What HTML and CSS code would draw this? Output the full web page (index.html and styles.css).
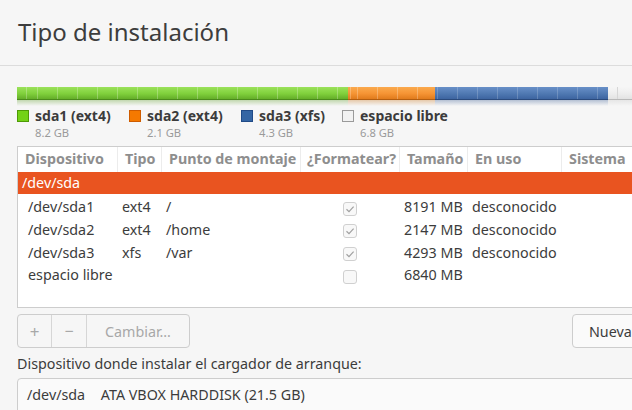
FILE: index.html
```html
<!DOCTYPE html>
<html lang="es">
<head>
<meta charset="utf-8">
<title>Tipo de instalación</title>
<link rel="stylesheet" href="styles.css">
</head>
<body>
<div class="window">
  <header class="titlebar">
    <h1 class="title">Tipo de instalación</h1>
  </header>
  <main class="content">
    <div class="bar">
      <div class="seg seg-green"><div class="fill"></div><div class="refl"></div></div>
      <div class="seg seg-orange"><div class="fill"></div><div class="refl"></div></div>
      <div class="seg seg-blue"><div class="fill"></div><div class="refl"></div></div>
      <div class="seg seg-free"><div class="fill"></div><div class="refl"></div></div>
    </div>
    <div class="legend">
      <div class="legend-item li-1">
        <span class="swatch sw-green"></span>
        <div class="legend-text"><div class="legend-name">sda1 (ext4)</div><div class="legend-size">8.2 GB</div></div>
      </div>
      <div class="legend-item li-2">
        <span class="swatch sw-orange"></span>
        <div class="legend-text"><div class="legend-name">sda2 (ext4)</div><div class="legend-size">2.1 GB</div></div>
      </div>
      <div class="legend-item li-3">
        <span class="swatch sw-blue"></span>
        <div class="legend-text"><div class="legend-name">sda3 (xfs)</div><div class="legend-size">4.3 GB</div></div>
      </div>
      <div class="legend-item li-4">
        <span class="swatch sw-free"></span>
        <div class="legend-text"><div class="legend-name">espacio libre</div><div class="legend-size">6.8 GB</div></div>
      </div>
    </div>

    <div class="table">
      <div class="row head">
        <div class="c c1">Dispositivo</div>
        <div class="c c2">Tipo</div>
        <div class="c c3">Punto de montaje</div>
        <div class="c c4">¿Formatear?</div>
        <div class="c c5">Tamaño</div>
        <div class="c c6">En uso</div>
        <div class="c c7">Sistema</div>
      </div>
      <div class="row sel">
        <div class="c c1">/dev/sda</div>
      </div>
      <div class="row data">
        <div class="c c1 child">/dev/sda1</div>
        <div class="c c2">ext4</div>
        <div class="c c3">/</div>
        <div class="c c4"><span class="check on"><svg viewBox="0 0 14 14" width="14" height="14"><path d="M3.5 7.2 L6 9.6 L10.6 4.6" fill="none" stroke="#a0a0a0" stroke-width="1.2"/></svg></span></div>
        <div class="c c5">8191 MB</div>
        <div class="c c6">desconocido</div>
        <div class="c c7"></div>
      </div>
      <div class="row data">
        <div class="c c1 child">/dev/sda2</div>
        <div class="c c2">ext4</div>
        <div class="c c3">/home</div>
        <div class="c c4"><span class="check on"><svg viewBox="0 0 14 14" width="14" height="14"><path d="M3.5 7.2 L6 9.6 L10.6 4.6" fill="none" stroke="#a0a0a0" stroke-width="1.2"/></svg></span></div>
        <div class="c c5">2147 MB</div>
        <div class="c c6">desconocido</div>
        <div class="c c7"></div>
      </div>
      <div class="row data">
        <div class="c c1 child">/dev/sda3</div>
        <div class="c c2">xfs</div>
        <div class="c c3">/var</div>
        <div class="c c4"><span class="check on"><svg viewBox="0 0 14 14" width="14" height="14"><path d="M3.5 7.2 L6 9.6 L10.6 4.6" fill="none" stroke="#a0a0a0" stroke-width="1.2"/></svg></span></div>
        <div class="c c5">4293 MB</div>
        <div class="c c6">desconocido</div>
        <div class="c c7"></div>
      </div>
      <div class="row data">
        <div class="c c1 child">espacio libre</div>
        <div class="c c2"></div>
        <div class="c c3"></div>
        <div class="c c4"><span class="check"></span></div>
        <div class="c c5">6840 MB</div>
        <div class="c c6"></div>
        <div class="c c7"></div>
      </div>
      <div class="table-fill"></div>
    </div>

    <div class="toolbar">
      <div class="btn-group">
        <button class="btn b-add">+</button>
        <button class="btn b-rem">−</button>
        <button class="btn b-chg">Cambiar…</button>
      </div>
      <button class="btn b-new">Nueva tabla de particiones…</button>
    </div>

    <div class="boot-label">Dispositivo donde instalar el cargador de arranque:</div>
    <div class="combo">
      <span class="dev">/dev/sda</span>
      <span class="desc">ATA VBOX HARDDISK (21.5 GB)</span>
    </div>
  </main>
</div>
</body>
</html>
```

FILE: styles.css
```css
html, body {
  margin: 0;
  padding: 0;
  background: #f6f6f6;
  overflow: hidden;
}
body {
  width: 632px;
  height: 410px;
  font-family: "Noto Sans", "Open Sans", sans-serif;
  font-size: 14.3px;
  color: #3c3c3c;
}
.window {
  width: 820px;
}
.titlebar {
  height: 65px;
  border-bottom: 1px solid #dcdcdc;
  box-sizing: content-box;
}
.title {
  margin: 0;
  padding: 16px 0 0 18px;
  font-size: 24px;
  font-weight: normal;
  line-height: 32px;
  color: #3d3d3d;
}
.content {
  padding: 21px 0 0 17px;
}

/* partition bar */
.bar {
  display: flex;
  height: 19px;
}
.seg {
  display: flex;
  flex-direction: column;
}
.fill {
  height: 13px;
  box-sizing: border-box;
  border-bottom: 1px solid rgba(0,0,0,0.25);
}
.refl {
  height: 6px;
  opacity: 0.35;
}
.seg-green { width: 331px; }
.seg-orange { width: 87px; }
.seg-blue { width: 173px; }
.seg-free { width: 80px; }

.seg-green .fill {
  background: repeating-linear-gradient(to right, rgba(255,255,255,0.25) 0 1px, transparent 1px 20px) 20px 0,
              linear-gradient(#9be25a, #80d03c 55%, #64ae28);
  border-bottom-color: #4b8a1c;
}
.seg-green .refl { background: linear-gradient(#5f9e2a, rgba(246,246,246,0)); }
.seg-orange .fill {
  background: repeating-linear-gradient(to right, rgba(255,255,255,0.25) 0 1px, transparent 1px 20px) 9px 0,
              linear-gradient(#fbaa4e, #f59434 55%, #e07b1c);
  border-bottom-color: #b35e10;
}
.seg-orange .refl { background: linear-gradient(#c8761e, rgba(246,246,246,0)); }
.seg-blue .fill {
  background: repeating-linear-gradient(to right, rgba(255,255,255,0.18) 0 1px, transparent 1px 20px) 2px 0,
              linear-gradient(#6890c8, #5079b2 55%, #3d64a0);
  border-bottom-color: #2b4a7c;
}
.seg-blue .refl { background: linear-gradient(#3a5c92, rgba(246,246,246,0)); }
.seg-free .fill {
  background: repeating-linear-gradient(to right, #d6d6d6 0 1px, transparent 1px 20px) 9px 0,
              linear-gradient(#f6f6f6, #ececec 60%, #e2e2e2);
  border-bottom-color: #b8b8b8;
}
.seg-free .refl { background: linear-gradient(#c8c8c8, rgba(246,246,246,0)); }

/* legend */
.legend {
  display: flex;
  margin-top: 1px;
  height: 39px;
}
.legend-item {
  display: flex;
  gap: 6px;
}
.li-1 { width: 112px; }
.li-2 { width: 112px; }
.li-3 { width: 101px; }
.swatch {
  width: 10px;
  height: 10px;
  border: 1px solid;
  margin-top: 3px;
}
.sw-green { background: #73d216; border-color: #4e9a06; }
.sw-orange { background: #f57900; border-color: #ce5c00; }
.sw-blue { background: #3465a4; border-color: #204a87; }
.sw-free { background: #f2f2f2; border-color: #9a9a9a; }
.legend-name {
  font-weight: bold;
  font-size: 14px;
  line-height: 18px;
  color: #3c3c3c;
  white-space: nowrap;
}
.legend-size {
  font-size: 11.2px;
  line-height: 15px;
  color: #9a9a9a;
}

/* table */
.table {
  border-top: 1px solid #cdcdcd;
  border-left: 1px solid #cdcdcd;
  border-bottom: 1px solid #cdcdcd;
  background: #fff;
  height: 160px;
  display: flex;
  flex-direction: column;
}
.row {
  display: flex;
  height: 22.7px;
  align-items: center;
  white-space: nowrap;
  line-height: 18px;
  box-sizing: border-box;
}
.row.data {
  padding-top: 4px;
}
.row.head {
  height: 25px;
  font-weight: bold;
  color: #8e8e8e;
}
.row.sel {
  height: 22px;
  background: #e95420;
  color: #fff;
}
.c {
  box-sizing: border-box;
  padding-left: 5px;
  overflow: hidden;
}
.head .c {
  padding-left: 7px;
  border-left: 1px solid #ececec;
  height: 100%;
  line-height: 23px;
}
.head .c1 { border-left: none; }
.c1 { width: 99px; }
.c2 { width: 44px; }
.c3 { width: 139px; }
.c4 { width: 99px; text-align: center; padding-left: 0; }
.c5 { width: 68px; }
.c6 { width: 94px; }
.c7 { width: 100px; }
.head .c4 { text-align: left; padding-left: 6px; }
.sel .c1 { padding-left: 4px; }
.child { padding-left: 10px; }
.check {
  display: inline-block;
  width: 14px;
  height: 14px;
  box-sizing: border-box;
  border: 1px solid #d0d0d0;
  border-radius: 3px;
  background: #f8f8f8;
  vertical-align: middle;
}
.check svg {
  display: block;
  margin: -1px 0 0 -1px;
}
.table-fill { flex: 1; }

/* toolbar */
.toolbar {
  display: flex;
  justify-content: space-between;
  margin-top: 6px;
  height: 34px;
}
.btn-group {
  display: flex;
  border: 1px solid #cdcdcd;
  border-radius: 4px;
  background: #f6f6f6;
  overflow: hidden;
}
.btn {
  font-family: inherit;
  font-size: 14.3px;
  border: none;
  background: transparent;
  color: #a8a8a8;
  margin: 0;
  padding: 0;
}
.b-add { width: 34px; border-right: 1px solid #d6d6d6; font-size: 17px; }
.b-rem { width: 35px; border-right: 1px solid #d6d6d6; font-size: 16px; }
.b-chg { width: 102px; }
.b-new {
  border: 1px solid #cdcdcd;
  border-radius: 4px;
  background: #fafafa;
  color: #3c3c3c;
  padding: 0 16px;
  width: 248px;
  text-align: left;
  white-space: nowrap;
}

.boot-label {
  margin-top: 6px;
  line-height: 20px;
  color: #3c3c3c;
}
.combo {
  margin-top: 4px;
  height: 40px;
  border: 1px solid #cdcdcd;
  border-radius: 4px 0 0 0;
  background: #fafafa;
  padding: 6px 0 0 9px;
  box-sizing: border-box;
  line-height: 20px;
}
.combo .desc { margin-left: 12px; }
```
